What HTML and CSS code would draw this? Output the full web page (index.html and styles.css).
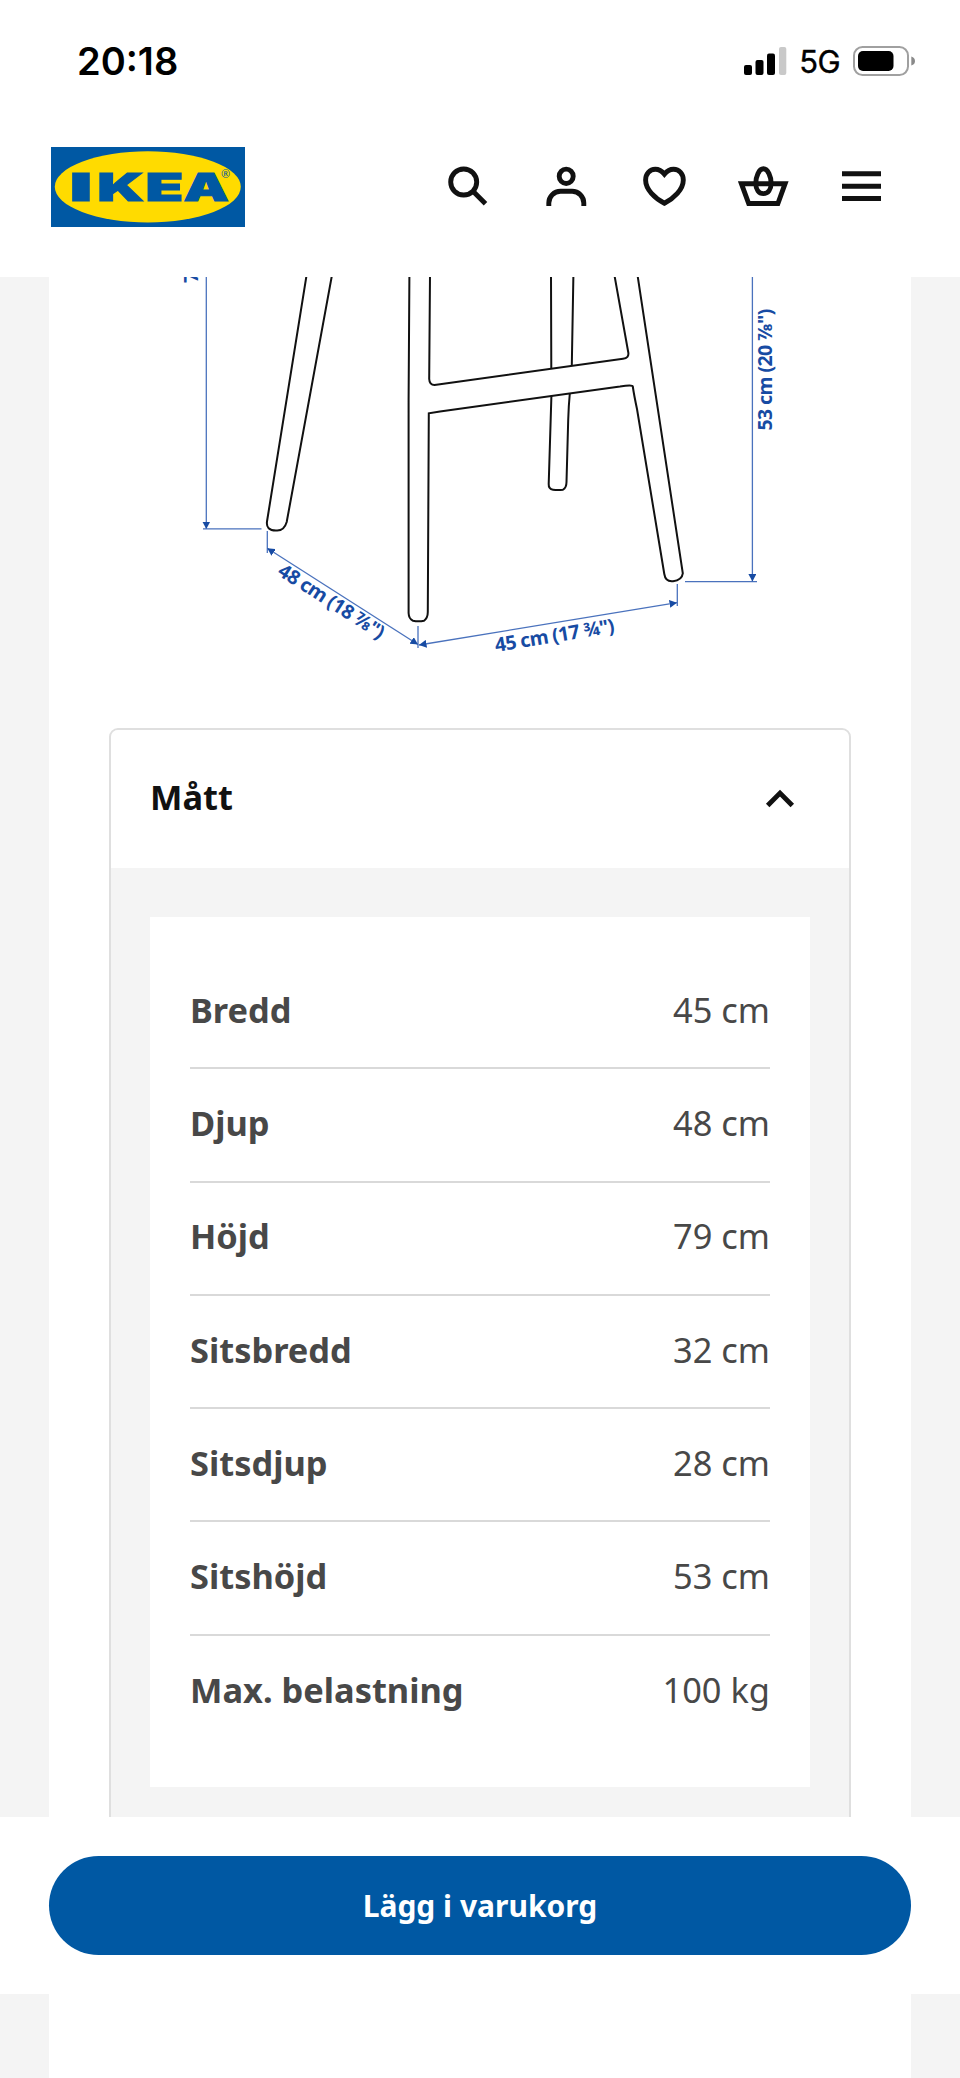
FILE: index.html
```html
<!DOCTYPE html>
<html lang="sv">
<head>
    <meta charset="UTF-8">
    <meta name="viewport" content="width=device-width, initial-scale=1.0">
    <title>IKEA</title>
    <link rel="stylesheet" href="styles.css">
</head>
<body>
    <header class="top">
        <div class="status">
            <span class="time">20:18</span>
            <div class="status-right">
                <svg class="signal" width="43" height="28" viewBox="0 0 43 28">
                    <rect x="0" y="18" width="8" height="10" rx="2"/>
                    <rect x="11.5" y="13" width="8" height="15" rx="2"/>
                    <rect x="23" y="6.5" width="8" height="21.5" rx="2"/>
                    <rect x="35" y="0" width="7.3" height="28" rx="2" fill="#c9c9c9"/>
                </svg>
                <span class="network">5G</span>
                <svg class="battery" width="63" height="30" viewBox="0 0 63 30">
                    <rect x="1" y="1" width="54" height="28" rx="8.5" fill="none" stroke="#a0a0a0" stroke-width="2"/>
                    <rect x="5" y="5" width="35.5" height="20" rx="5"/>
                    <path d="M58.3 10.5Q62 11.5 62 15T58.3 19.5Z" fill="#8a8a8a"/>
                </svg>
            </div>
        </div>
        <div class="nav">
            <svg class="logo" width="194" height="80" viewBox="0 0 194 80">
                <rect width="194" height="80" fill="#0058a3"/>
                <ellipse cx="96.8" cy="39.8" rx="93" ry="35.6" fill="#ffdb00"/>
                <text class="logo-text" y="53.5"><tspan x="18.6" textLength="23" lengthAdjust="spacingAndGlyphs">I</tspan><tspan x="46.2" textLength="47" lengthAdjust="spacingAndGlyphs">K</tspan><tspan x="94.6" textLength="38" lengthAdjust="spacingAndGlyphs">E</tspan><tspan x="132.6" textLength="45.4" lengthAdjust="spacingAndGlyphs">A</tspan></text>
                <text class="logo-reg" x="170" y="31">®</text>
            </svg>
            <nav class="icons">
                <svg width="60" height="60" viewBox="436 157 60 60"><circle cx="463.7" cy="182" r="13"/><path d="M473 191.3L485.5 203.8"/></svg>
                <svg width="60" height="60" viewBox="535 157 60 60"><ellipse cx="566.2" cy="176.3" rx="7" ry="7.2"/><path d="M548.8 206V203a11.7 11.7 0 0 1 11.7-11.7h11.6a11.7 11.7 0 0 1 11.7 11.7v3"/></svg>
                <svg width="60" height="60" viewBox="634 157 60 60"><path d="M664.4 174.2C661.8 171 658.8 169.3 655.3 169.3C649.7 169.3 645.6 173.9 645.6 180C645.6 189.5 655 198.5 664.4 203.2C673.8 198.5 683.3 189.5 683.3 180C683.3 173.9 679.2 169.3 673.6 169.3C670 169.3 667 171 664.4 174.2Z"/></svg>
                <svg width="60" height="60" viewBox="733 157 60 60"><path d="M741.4 183.7H785.1L777.9 203.5H748.7Z"/><path d="M763.4 168.8C758.8 168.8 755.8 177 755.8 183.2C755.8 189.5 758.8 193.6 763.4 193.6S771.1 189.5 771.1 183.2C771.1 177 768 168.8 763.4 168.8Z"/></svg>
                <svg width="60" height="60" viewBox="832 157 60 60"><path d="M842 173.8H881M842 186.2H881M842 198.5H881"/></svg>
            </nav>
        </div>
    </header>

    <main class="page">
        <svg class="drawing" width="862" height="451" viewBox="49 277 862 451">
            <defs>
                <marker id="arrow" markerUnits="userSpaceOnUse" markerWidth="8" markerHeight="8" refX="7.5" refY="4" orient="auto-start-reverse">
                    <path d="M0 0L7.5 4L0 8Z" fill="#174ba3"/>
                </marker>
            </defs>
            <!-- stool legs and foot rail -->
            <g class="stool">
                <path d="M306.6 275L267 521.5Q265.8 530.5 276 530.5Q284 531.3 286.7 522L332 275"/>
                <path d="M409.4 275L408.6 400V613Q408.8 619 413 620.7Q418.5 622 424 620.7Q427.8 618 427.8 612L428.8 413.3L440 411.5L620 386.6Q632.5 384.4 632.8 386.5Q634 395 637 409L664.3 574Q665.5 582 673 581.2Q682 580 682.8 573.3L637.5 275"/>
                <path d="M430 275L429.2 379Q429.5 385 434.5 385L440 384.2L623 358.7Q629.2 358 628.3 352.5L614.4 275"/>
                <path d="M551 275L551.3 368.3M573.4 275L571.8 366"/>
                <path d="M551.4 396L548.7 484Q548.5 489 553 489.7Q558 490.5 563 489.7Q566.4 488 566.5 482L568.2 420Q568.6 406 569.8 393.5"/>
            </g>
            <!-- dimension lines -->
            <g class="dims">
                <path d="M206.3 270V529" marker-end="url(#arrow)"/>
                <path d="M203 528.8H261.5M267.3 531V553M418 626V648M677.3 584V606M685 581.7H757"/>
                <path d="M267.3 548.3L418 644.5" marker-start="url(#arrow)" marker-end="url(#arrow)"/>
                <path d="M419 645L677 602.7" marker-start="url(#arrow)" marker-end="url(#arrow)"/>
                <path d="M752.4 270V581.5" marker-end="url(#arrow)"/>
            </g>
            <g class="dim-text">
                <text transform="translate(197.7 283) rotate(-90)">7</text>
                <text transform="translate(276.6 574.2) rotate(32.6)" textLength="122">48 cm (18 ⅞")</text>
                <text transform="translate(496 652) rotate(-9.4)" textLength="121">45 cm (17 ¾")</text>
                <text transform="translate(772.4 430.6) rotate(-90)" textLength="122">53 cm (20 ⅞")</text>
            </g>
        </svg>

        <section class="accordion">
            <div class="accordion-head">
                <h2>Mått</h2>
                <svg width="30" height="20" viewBox="0 0 30 20"><path d="M2.7 16.4L15 4.1L27.3 16.4" fill="none" stroke="#111" stroke-width="4.9"/></svg>
            </div>
            <div class="accordion-body">
                <dl class="measures">
                    <div class="row"><dt>Bredd</dt><dd>45 cm</dd></div>
                    <div class="row"><dt>Djup</dt><dd>48 cm</dd></div>
                    <div class="row"><dt>Höjd</dt><dd>79 cm</dd></div>
                    <div class="row"><dt>Sitsbredd</dt><dd>32 cm</dd></div>
                    <div class="row"><dt>Sitsdjup</dt><dd>28 cm</dd></div>
                    <div class="row"><dt>Sitshöjd</dt><dd>53 cm</dd></div>
                    <div class="row"><dt>Max. belastning</dt><dd>100 kg</dd></div>
                </dl>
            </div>
        </section>
    </main>

    <footer class="buy">
        <button class="buy-button">Lägg i varukorg</button>
    </footer>
    <div class="page page-end"></div>
</body>
</html>
```

FILE: styles.css
```css
* {
    box-sizing: border-box;
}
body {
    margin: 0;
    height: 2078px;
    display: flex;
    flex-direction: column;
    overflow: hidden;
    background: #f4f4f4;
    font-family: "Noto Sans", sans-serif;
    color: #484848;
}
.top {
    flex: none;
    height: 277px;
    background: #fff;
}
.status {
    display: flex;
    justify-content: space-between;
    height: 122px;
    padding: 0 44px 0 77px;
    align-items: center;
    font-family: Inter, sans-serif;
    color: #000;
}
.time {
    font-size: 38px;
    font-weight: 600;
    line-height: 46px;
}
.status-right {
    display: flex;
    align-items: center;
}
.network {
    margin: 0 13px 0 12px;
    padding-top: 2px;
    font-size: 31px;
    line-height: 36px;
    letter-spacing: -0.6px;
    -webkit-text-stroke: 0.4px #000;
}
.nav {
    display: flex;
    justify-content: space-between;
    padding: 25px 68px 0 51px;
}
.logo-text {
    font-family: Inter, sans-serif;
    font-size: 38.5px;
    font-weight: 900;
    fill: #0058a3;
    stroke: #0058a3;
    stroke-width: 1;
}
.logo-reg {
    font-family: "Noto Sans", sans-serif;
    font-size: 11px;
    fill: #0058a3;
}
.icons {
    display: flex;
    gap: 39px;
    padding-top: 10px;
}
.icons svg {
    fill: none;
    stroke: #111;
    stroke-width: 4.9;
}
.page {
    flex: none;
    height: 1540px;
    margin: 0 49px;
    overflow: hidden;
    background: #fff;
}
.page-end {
    height: 84px;
}
.drawing {
    display: block;
}
.stool {
    fill: none;
    stroke: #111;
    stroke-width: 2;
}
.dims {
    fill: none;
    stroke: #4a72bd;
    stroke-width: 1.3;
}
.dim-text {
    font-size: 19.5px;
    font-weight: 700;
    fill: #174ba3;
}
.accordion {
    height: 1200px;
    margin: 0 60px;
    border: 2px solid #dfdfdf;
    border-radius: 9px;
    overflow: hidden;
    background: #f4f4f4;
}
.accordion-head {
    display: flex;
    justify-content: space-between;
    align-items: center;
    height: 138px;
    padding: 0 54px 0 39px;
    background: #fff;
}
.accordion-head h2 {
    margin: 0;
    padding-bottom: 4px;
    font-size: 34.4px;
    line-height: 48px;
    color: #111;
}
.accordion-body {
    padding: 49px 39px 0;
}
.measures {
    height: 870px;
    margin: 0;
    padding: 39px 40px;
    background: #fff;
}
.row {
    display: flex;
    justify-content: space-between;
    align-items: center;
    height: 113.3px;
    padding-bottom: 4px;
    border-bottom: 2px solid #d9d9d9;
    font-size: 34.4px;
    line-height: 50px;
}
.row:last-child {
    border-bottom: none;
}
dt {
    font-weight: 700;
}
dd {
    margin: 0;
}
.buy {
    flex: none;
    height: 177px;
    padding: 39px 49px;
    background: #fff;
}
.buy-button {
    display: block;
    width: 100%;
    height: 99px;
    padding: 0;
    border: none;
    border-radius: 50px;
    background: #0058a3;
    color: #fff;
    font: 700 30px "Noto Sans", sans-serif;
}
```
